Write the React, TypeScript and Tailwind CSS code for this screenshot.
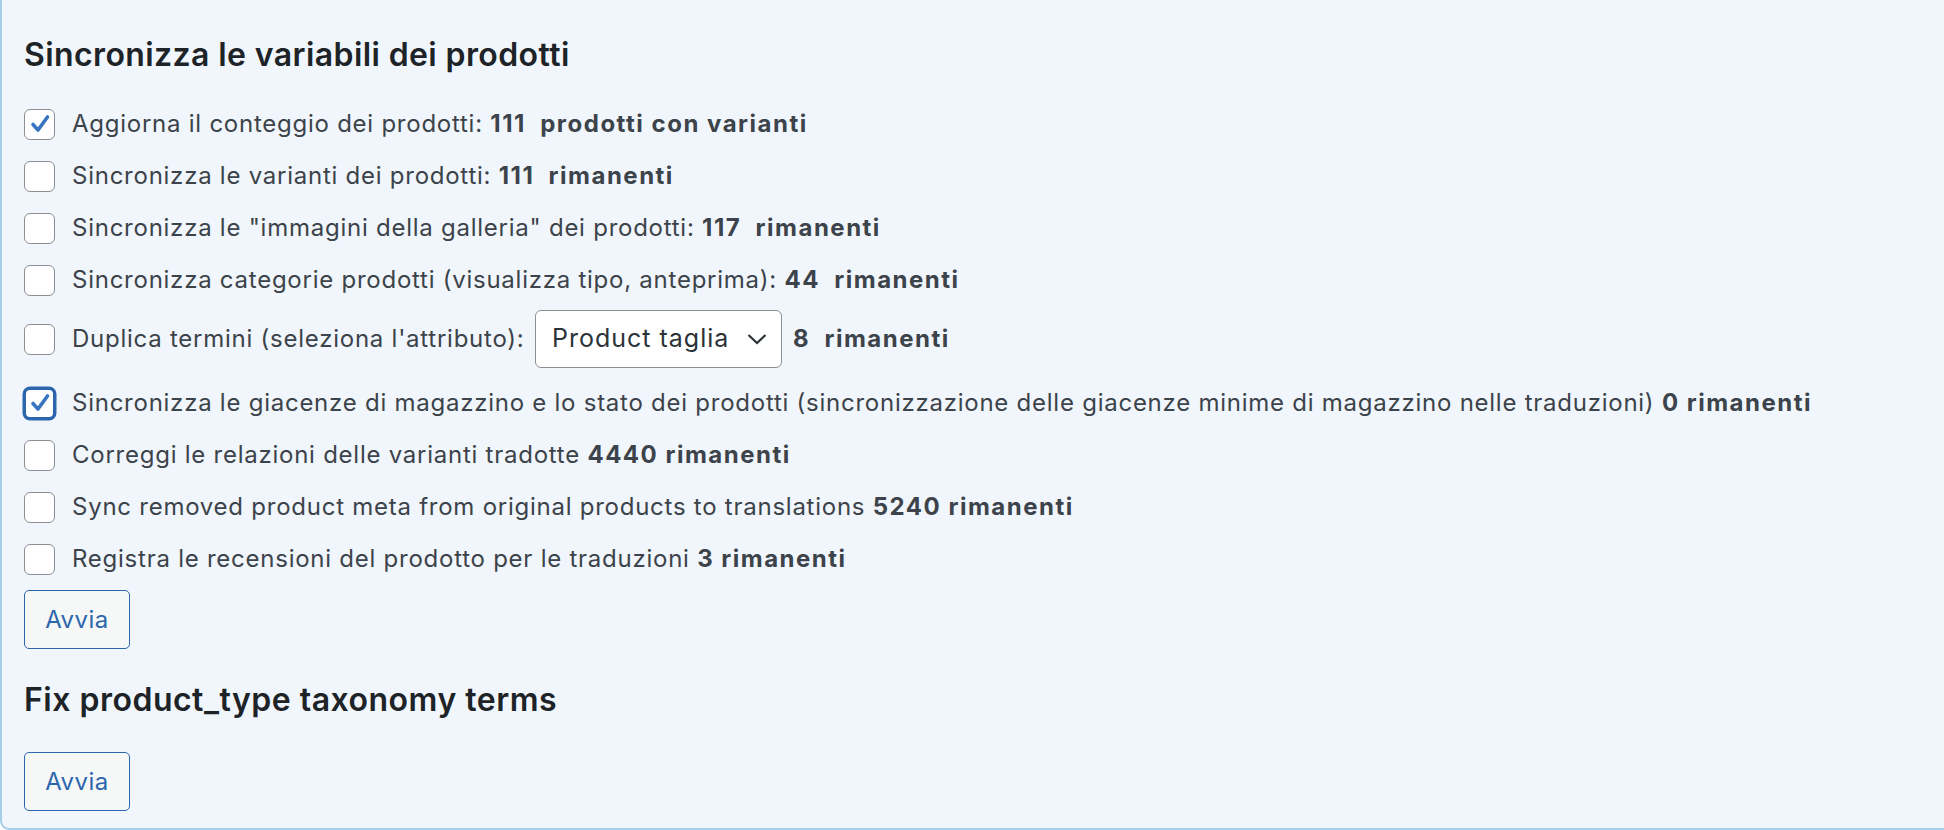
import React from "react";

type Row = {
  checked?: boolean;
  focused?: boolean;
  label: string;
  strong: string;
  select?: boolean;
};

const rows: Row[] = [
  { checked: true, label: "Aggiorna il conteggio dei prodotti: ", strong: "111  prodotti con varianti" },
  { label: "Sincronizza le varianti dei prodotti: ", strong: "111  rimanenti" },
  { label: 'Sincronizza le "immagini della galleria" dei prodotti: ', strong: "117  rimanenti" },
  { label: "Sincronizza categorie prodotti (visualizza tipo, anteprima): ", strong: "44  rimanenti" },
  { label: "Duplica termini (seleziona l'attributo): ", strong: "8  rimanenti", select: true },
  {
    checked: true,
    focused: true,
    label:
      "Sincronizza le giacenze di magazzino e lo stato dei prodotti (sincronizzazione delle giacenze minime di magazzino nelle traduzioni) ",
    strong: "0 rimanenti",
  },
  { label: "Correggi le relazioni delle varianti tradotte ", strong: "4440 rimanenti" },
  { label: "Sync removed product meta from original products to translations ", strong: "5240 rimanenti" },
  { label: "Registra le recensioni del prodotto per le traduzioni ", strong: "3 rimanenti" },
];

function Checkbox({ checked, focused }: { checked?: boolean; focused?: boolean }) {
  return (
    <span
      className={
        focused
          ? "flex h-[31px] w-[31px] shrink-0 items-center justify-center rounded-[6px] border-2 border-[#2c66ad] bg-white ring-[1.5px] ring-[#2c66ad]"
          : "flex h-[31px] w-[31px] shrink-0 items-center justify-center rounded-[6px] border-[1.5px] border-[#8c8f94] bg-white"
      }
    >
      {checked && (
        <svg width="22" height="22" viewBox="0 0 22 22" fill="none">
          <path d="M4 11.5 L9 17 L18.5 4" stroke="#3874c0" strokeWidth="3.6" strokeLinecap="round" strokeLinejoin="round" />
        </svg>
      )}
    </span>
  );
}

function Button() {
  return (
    <button className="flex h-[59px] w-[106px] items-center justify-center rounded-[5px] border-[1.5px] border-[#2c66ad] bg-[#f6f7f7] text-[24px] tracking-[0.5px] text-[#2c66ad]">
      Avvia
    </button>
  );
}

export default function App() {
  return (
    <div className="h-[830px] w-[1944px] overflow-hidden bg-white font-['Inter','Liberation_Sans',sans-serif]">
      <div className="h-[830px] rounded-bl-[9px] border-b-2 border-l-2 border-[#a6cfe7] bg-[#f0f6fb] pl-[22px] pt-[35px]">
        <h2 className="h-[40px] text-[32px] font-semibold leading-[40px] tracking-[0.4px] text-[#1d2327]">
          Sincronizza le variabili dei prodotti
        </h2>
        <div className="mt-[23px] flex flex-col text-[24px] tracking-[0.75px] text-[#3c434a]">
          {rows.map((r, i) => (
            <div
              key={i}
              className={r.select ? "flex items-center pb-[9px] pt-[4px]" : "flex h-[52px] items-center"}
            >
              <Checkbox checked={r.checked} focused={r.focused} />
              <span className="ml-[17px] whitespace-pre">{r.label}</span>
              {r.select && (
                <span className="ml-[3px] mr-[11px] flex h-[58px] w-[247px] items-center justify-between rounded-[6px] border-[1.5px] border-[#8c8f94] bg-white pl-[16px] pr-[13px] text-[25px] tracking-[1px] text-[#2c3338]">
                  Product taglia
                  <svg width="22" height="14" viewBox="0 0 22 14" fill="none">
                    <path d="M2.5 3 L11 11 L19.5 3" stroke="#2c3338" strokeWidth="2.2" />
                  </svg>
                </span>
              )}
              <span className="whitespace-pre font-bold tracking-[1.5px]">{r.strong}</span>
            </div>
          ))}
        </div>
        <div className="mt-[5px]">
          <Button />
        </div>
        <h2 className="mt-[31px] h-[40px] text-[32px] font-semibold leading-[40px] tracking-[0.5px] text-[#1d2327]">
          Fix product_type taxonomy terms
        </h2>
        <div className="mt-[32px]">
          <Button />
        </div>
      </div>
    </div>
  );
}
